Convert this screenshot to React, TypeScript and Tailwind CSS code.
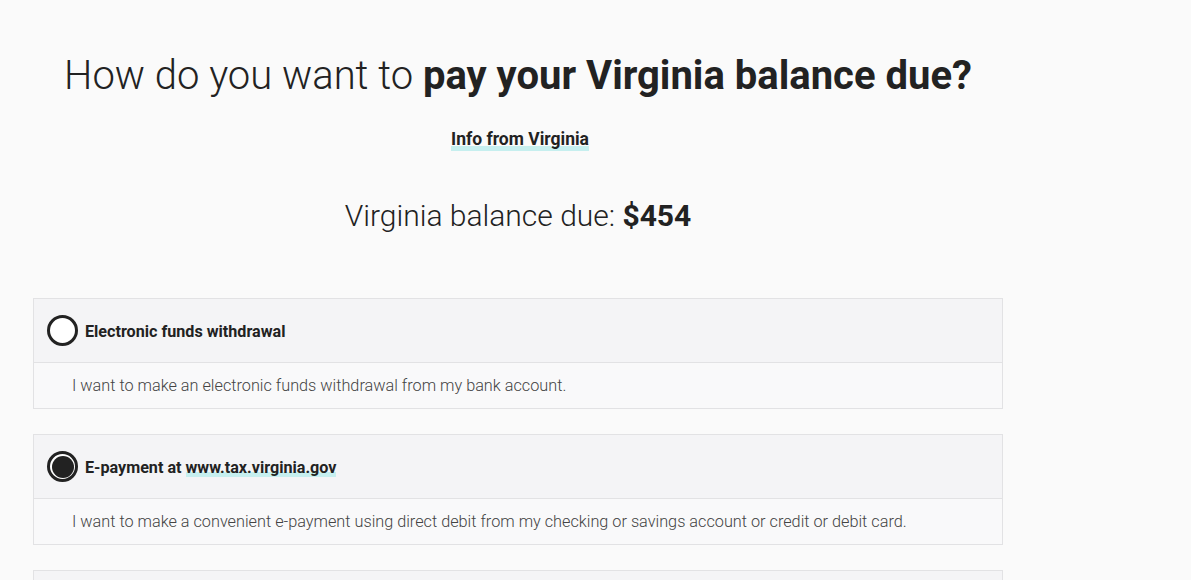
import React from "react";

function Radio({ checked }: { checked?: boolean }) {
  return (
    <span className="flex h-[31px] w-[31px] shrink-0 items-center justify-center rounded-full border-[3px] border-[#222222] bg-white">
      {checked && <span className="h-[22px] w-[22px] rounded-full bg-[#222222]" />}
    </span>
  );
}

function Option({
  checked,
  title,
  body,
}: {
  checked?: boolean;
  title: React.ReactNode;
  body: string;
}) {
  return (
    <div className="border border-[#e2e2e4] bg-[#f9f9fa]">
      <div className="flex h-[64px] items-center gap-[7px] border-b border-[#e2e2e4] bg-[#f4f4f6] pl-[13px]">
        <Radio checked={checked} />
        <span className="pt-[4px] text-[16.15px] font-bold text-[#222222]">{title}</span>
      </div>
      <div className="flex h-[45px] items-center pl-[38px] pt-[2px] text-[16.25px] font-light text-[#444444]">
        {body}
      </div>
    </div>
  );
}

export default function App() {
  return (
    <div
      className="min-h-screen w-full bg-[#fafafa] text-[#222222]"
      style={{ fontFamily: "Roboto, 'Noto Sans', sans-serif" }}
    >
      <div className="ml-[33px] flex w-[970px] flex-col pt-[52px]">
        <h1 className="text-center text-[40px] font-light leading-[48px] text-[#222222]">
          How do you want to <span className="font-bold">pay your Virginia balance due?</span>
        </h1>
        <div className="mt-[27px] flex justify-center pl-[4px]">
          <span className="text-[17.5px] font-bold leading-[24px] shadow-[inset_0_-5px_0_#c6efef]">
            Info from Virginia
          </span>
        </div>
        <div className="mt-[47px] text-center text-[30px] font-light leading-[36px]">
          Virginia balance due: <span className="font-bold">$454</span>
        </div>
        <div className="mt-[64px] flex flex-col gap-[25px]">
          <Option
            title="Electronic funds withdrawal"
            body="I want to make an electronic funds withdrawal from my bank account."
          />
          <Option
            checked
            title={
              <>
                E-payment at{" "}
                <span className="shadow-[inset_0_-5px_0_#c6efef]">www.tax.virginia.gov</span>
              </>
            }
            body="I want to make a convenient e-payment using direct debit from my checking or savings account or credit or debit card."
          />
          <Option title="Pay by check or money order" body="I want to mail a check or money order." />
        </div>
      </div>
    </div>
  );
}
